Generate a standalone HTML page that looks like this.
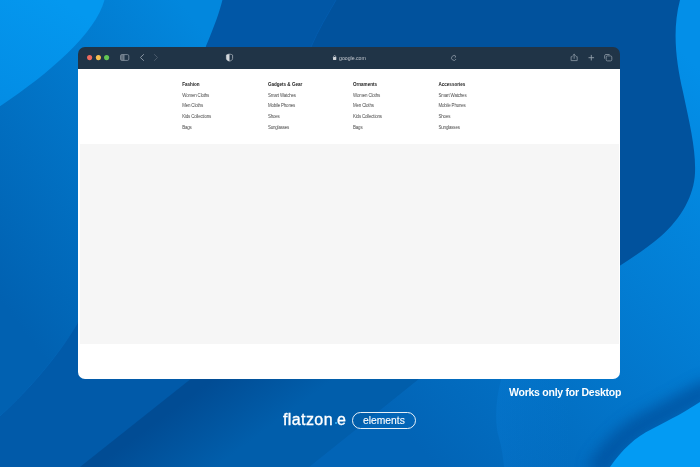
<!DOCTYPE html>
<html><head><meta charset="utf-8">
<style>
html,body{margin:0;padding:0;width:700px;height:467px;overflow:hidden;background:#0157a6;font-family:"Liberation Sans",sans-serif;}
#bg{position:absolute;left:0;top:0;width:700px;height:467px;}
#win{position:absolute;left:78px;top:47px;width:542.3px;height:331.5px;border-radius:7px;overflow:hidden;will-change:transform;}
#foot{position:absolute;left:0;top:297px;width:100%;height:34.5px;background:#fff;}
#hdr{position:absolute;left:0;top:0;width:100%;height:22px;background:#203447;}
#menu{position:absolute;left:0;top:22px;width:100%;height:75px;background:#fff;}
#gray{position:absolute;left:0;top:97px;right:0;height:200px;background:#f6f6f6;border-left:2px solid #fff;border-right:1px solid #fff;box-sizing:border-box;}
.col{position:absolute;top:0;}
.col b{position:absolute;left:0;white-space:nowrap;font-size:4.55px;letter-spacing:0;font-weight:bold;color:#1b1b1b;margin-top:-0.3px;}
.col span{position:absolute;left:0;white-space:nowrap;font-size:4.45px;letter-spacing:-0.17px;color:#4a4a4a;margin-top:0.3px;}
.t{position:absolute;white-space:nowrap;color:#fff;will-change:transform;}
</style></head><body>
<svg id="bg" width="700" height="467" viewBox="0 0 700 467">
  <defs>
    <linearGradient id="gB" gradientUnits="userSpaceOnUse" x1="30" y1="340" x2="289" y2="145">
      <stop offset="0" stop-color="#0161b1"/>
      <stop offset="1" stop-color="#0287dd"/>
    </linearGradient>
    <linearGradient id="gR" gradientUnits="userSpaceOnUse" x1="430" y1="460" x2="767" y2="141">
      <stop offset="0" stop-color="#0264b6"/>
      <stop offset="1" stop-color="#038fe8"/>
    </linearGradient>
    <linearGradient id="gA" gradientUnits="userSpaceOnUse" x1="60" y1="0" x2="0" y2="100">
      <stop offset="0" stop-color="#0498ef"/>
      <stop offset="1" stop-color="#038de5"/>
    </linearGradient>
    <filter id="blr" x="-50%" y="-50%" width="200%" height="200%"><feGaussianBlur stdDeviation="7"/></filter>
    <linearGradient id="gD" gradientUnits="userSpaceOnUse" x1="204" y1="386" x2="247" y2="444"><stop offset="0" stop-color="#014c94"/><stop offset="1" stop-color="#015eab"/></linearGradient>
    <linearGradient id="gO" gradientUnits="userSpaceOnUse" x1="496" y1="0" x2="570" y2="0"><stop offset="0" stop-color="#0a84e2" stop-opacity="0.25"/><stop offset="1" stop-color="#0a84e2" stop-opacity="0"/></linearGradient>
  </defs>
  <rect width="700" height="467" fill="#0157a6"/>
  <path d="M336,0 L700,0 L700,300 L290,300 L311,47 C318,30 328,14 336,0 Z" fill="#01529d"/>
  <path d="M336,0 C328,14 318,30 311,47" fill="none" stroke="#035cae" stroke-width="1"/>
  <path d="M0,416 C20,398 55,362 78,322 L192,378 L80,467 L0,467 Z" fill="#015aa9"/>
  <path d="M80,467 L192,378 L420,378 L309,467 Z" fill="url(#gD)"/>
  <path d="M0,0 L222.4,0 C220,10 215,25 206,46 L160,250 C130,300 100,310 78,322 C55,362 20,398 0,416 Z" fill="url(#gB)"/>
  <path d="M78,322 C55,362 20,398 0,416" fill="none" stroke="#0466b8" stroke-width="0.8"/>
  <path d="M680,0 C672,30 676,62 683,92 C690,125 696,150 695,173 C694,195 682,218 660,237 C648,247 635,256 621,265 L560,300 L420,378 L309,467 L700,467 L700,0 Z" fill="url(#gR)"/>
  <path d="M-2,0 L104.5,0 C95.2,33.4 49.7,73.3 -2,107.5 Z" fill="url(#gA)"/>
  <path d="M501.4,378 C496,398 494,422 499,438 C502,448 503,458 504,467 L600,467 L600,378 Z" fill="url(#gO)"/>
  <path d="M596,472 C610,449 626,433 648,422 C668,412 688,400 712,388" fill="none" stroke="#014f9c" stroke-width="22" opacity="0.75" filter="url(#blr)"/>
  <path d="M610,467 C622,450 635,437 652,429 C670,420 688,410 700,402 L700,467 Z" fill="#039bf3"/>
</svg>

<div id="win">
  <div id="hdr">
    <svg width="542" height="22" viewBox="0 0 542 22" style="position:absolute;left:0;top:0">
      <circle cx="11.6" cy="10.6" r="2.55" fill="#ee6a5f"/>
      <circle cx="20.4" cy="10.6" r="2.55" fill="#f5be4f"/>
      <circle cx="28.6" cy="10.6" r="2.55" fill="#62c554"/>
      <!-- sidebar -->
      <rect x="42.6" y="7.6" width="3.4" height="5.8" fill="#5f6d7b"/>
      <rect x="42.6" y="7.6" width="8.2" height="5.8" rx="1.3" fill="none" stroke="#8793a0" stroke-width="0.85"/>
      <line x1="46" y1="7.6" x2="46" y2="13.4" stroke="#8793a0" stroke-width="0.85"/>
      <!-- back -->
      <path d="M65.6,7.5 L62.4,10.5 L65.6,13.5" fill="none" stroke="#8793a0" stroke-width="1" stroke-linecap="round" stroke-linejoin="round"/>
      <path d="M76.4,7.5 L79.6,10.5 L76.4,13.5" fill="none" stroke="#4b5b6c" stroke-width="1" stroke-linecap="round" stroke-linejoin="round"/>
      <!-- shield -->
      <path d="M151.5,7.2 C149.8,7.2 148.9,7.7 148.4,8.1 L148.4,11.4 C148.4,13 150,13.8 151.5,14.1 C153,13.8 154.6,13 154.6,11.4 L154.6,8.1 C154.1,7.7 153.2,7.2 151.5,7.2 Z" fill="none" stroke="#aab2bb" stroke-width="0.8"/>
      <path d="M151.5,7.2 C149.8,7.2 148.9,7.7 148.4,8.1 L148.4,11.4 C148.4,13 150,13.8 151.5,14.1 Z" fill="#d3d7dc"/>
      <!-- lock -->
      <rect x="255" y="10.1" width="3.3" height="2.8" rx="0.4" fill="#d0d4d9"/>
      <path d="M255.65,10.3 L255.65,9.4 C255.65,8.3 257.65,8.3 257.65,9.4 L257.65,10.3" fill="none" stroke="#d0d4d9" stroke-width="0.6"/>
      <!-- reload -->
      <path d="M377.9,9.6 A2.4,2.4 0 1 0 378.1,12" fill="none" stroke="#8793a0" stroke-width="0.85"/>
      <path d="M376.4,8.4 L378,9.7 L376.6,10.9" fill="none" stroke="#8793a0" stroke-width="0.7"/>
      <!-- share -->
      <path d="M494.4,9.7 L493.1,9.7 L493.1,13.6 L499.2,13.6 L499.2,9.7 L497.9,9.7" fill="none" stroke="#8793a0" stroke-width="0.85" stroke-linejoin="round"/>
      <path d="M496.15,11.4 L496.15,7.3 M494.8,8.6 L496.15,7.3 L497.5,8.6" fill="none" stroke="#8793a0" stroke-width="0.85" stroke-linecap="round" stroke-linejoin="round"/>
      <!-- plus -->
      <path d="M510.9,10.7 L515.7,10.7 M513.3,8.3 L513.3,13.1" stroke="#9aa5b0" stroke-width="0.85" stroke-linecap="round"/>
      <!-- tabs -->
      <rect x="528.2" y="8.9" width="5.6" height="5" rx="1.2" fill="none" stroke="#8793a0" stroke-width="0.85"/>
      <path d="M526.6,11.7 L526.6,8.8 C526.6,8 527.2,7.5 528,7.5 L531.6,7.5" fill="none" stroke="#8793a0" stroke-width="0.85"/>
    </svg>
    <div class="t" style="left:260.9px;top:7.85px;font-size:5.2px;color:#c5cad1;">google.com</div>
  </div>
  <div id="menu">
    <div class="col" style="left:104.2px;">
      <b style="top:12.9px">Fashion</b>
      <span style="top:23.3px">Women Cloths</span>
      <span style="top:33.9px">Men Cloths</span>
      <span style="top:44.6px">Kids Collections</span>
      <span style="top:55.3px">Bags</span>
    </div>
    <div class="col" style="left:189.9px;">
      <b style="top:12.9px">Gadgets &amp; Gear</b>
      <span style="top:23.3px">Smart Watches</span>
      <span style="top:33.9px">Mobile Phones</span>
      <span style="top:44.6px">Shoes</span>
      <span style="top:55.3px">Sunglasses</span>
    </div>
    <div class="col" style="left:275px;">
      <b style="top:12.9px">Ornaments</b>
      <span style="top:23.3px">Women Cloths</span>
      <span style="top:33.9px">Men Cloths</span>
      <span style="top:44.6px">Kids Collections</span>
      <span style="top:55.3px">Bags</span>
    </div>
    <div class="col" style="left:360.5px;">
      <b style="top:12.9px">Accessories</b>
      <span style="top:23.3px">Smart Watches</span>
      <span style="top:33.9px">Mobile Phones</span>
      <span style="top:44.6px">Shoes</span>
      <span style="top:55.3px">Sunglasses</span>
    </div>
  </div>
  <div id="gray"></div>
  <div id="foot"></div>
</div>

<div class="t" style="left:509px;top:385.8px;font-size:10.5px;letter-spacing:-0.25px;font-weight:bold;">Works only for Desktop</div>
<div class="t" style="left:283px;top:410.5px;font-size:16px;letter-spacing:0.4px;-webkit-text-stroke:0.35px #fff;">flatzon</div>
<div style="position:absolute;left:334.5px;top:422.3px;width:2px;height:2px;border-radius:50%;background:#36bcff;"></div>
<div class="t" style="left:337px;top:410.5px;font-size:16px;-webkit-text-stroke:0.35px #fff;">e</div>
<div style="position:absolute;left:352px;top:411.5px;width:62px;height:15.5px;border:1px solid rgba(255,255,255,0.9);border-radius:9px;"></div>
<div class="t" style="left:363px;top:415.2px;font-size:10.3px;-webkit-text-stroke:0.1px #fff;">elements</div>
</body></html>
